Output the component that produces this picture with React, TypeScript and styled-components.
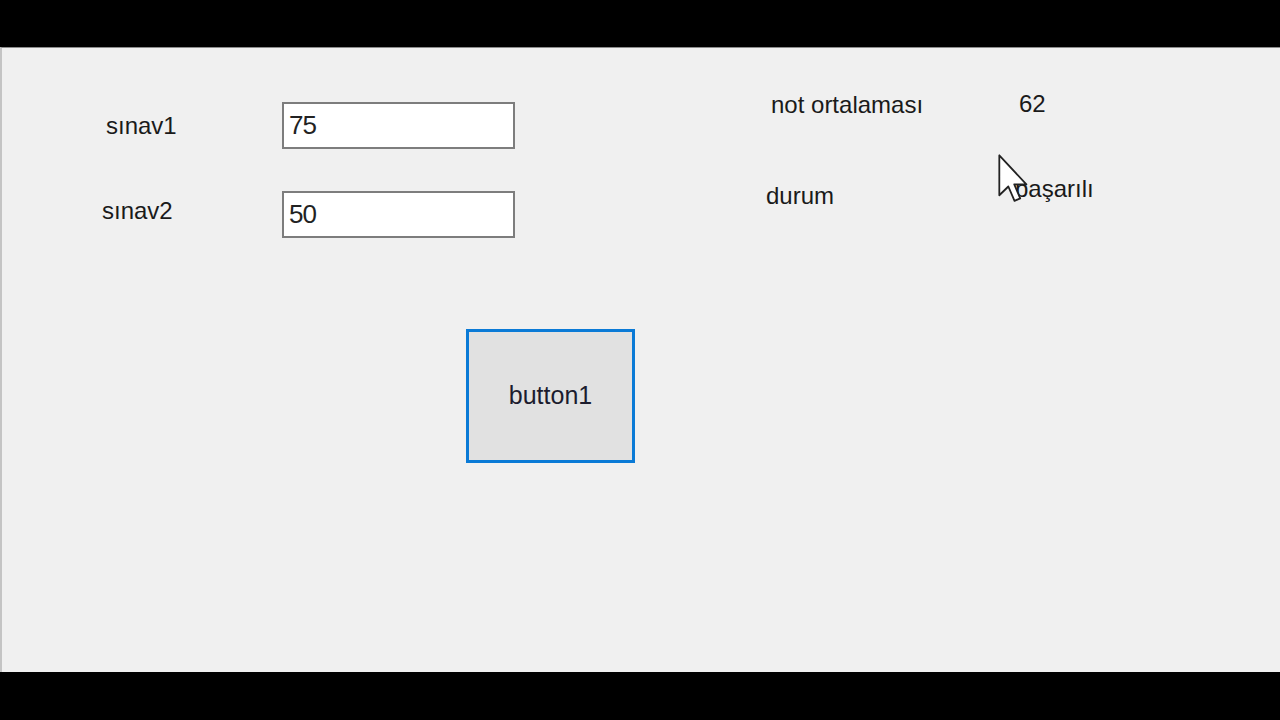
import React from "react";
import styled, { createGlobalStyle } from "styled-components";

const Global = createGlobalStyle`
  html, body { margin: 0; padding: 0; background: #000; }
  body { width: 1280px; height: 720px; overflow: hidden; }
`;

const Screen = styled.div`
  width: 1280px;
  height: 720px;
  display: flex;
  flex-direction: column;
  background: #000;
`;

const Bar = styled.div<{ $h: number }>`
  height: ${(p) => p.$h}px;
  flex: none;
  background: #000;
`;

const Form = styled.div`
  position: relative;
  height: 625px;
  flex: none;
  background: #f0f0f0;
  border-top: 1px solid #8c8c8c;
  border-left: 2px solid #c4c4c4;
  box-sizing: border-box;
  display: flex;
  font-family: "Liberation Sans", Arial, sans-serif;
  color: #1a1a1a;
`;

const LeftPane = styled.div`
  width: 700px;
  padding: 54px 0 0 101px;
  box-sizing: border-box;
  display: flex;
  flex-direction: column;
`;

const FieldRow = styled.div<{ $labelShift: number }>`
  display: grid;
  grid-template-columns: 179px 233px;
  align-items: center;
  height: 47px;
  margin-bottom: 42px;
  & > span { transform: translate(${(p) => p.$labelShift}px, ${(p) => p.$labelShift < 0 ? -4 : 0}px); }
`;

const Label = styled.span`
  font-size: 24px;
  letter-spacing: 0;
  line-height: 1;
`;

const TextBox = styled.div`
  height: 47px;
  box-sizing: border-box;
  background: #fff;
  border: 2px solid #7d7d7d;
  display: flex;
  align-items: center;
  padding-left: 5px;
  font-size: 26px;
  letter-spacing: -1px;
  color: #222;
`;

const Button = styled.div`
  margin: 49px 0 0 363px;
  width: 169px;
  height: 134px;
  box-sizing: border-box;
  border: 3px solid #0a7ad6;
  background: #e1e1e1;
  display: flex;
  align-items: center;
  justify-content: center;
  font-size: 25px;
  letter-spacing: 0;
  color: #1c1c2e;
  padding-bottom: 2px;
`;

const RightPane = styled.div`
  padding: 39px 0 0 64px;
  display: grid;
  grid-template-columns: 248px auto;
  grid-template-rows: 36px 36px;
  row-gap: 50px;
  align-content: start;
  align-items: center;
`;

const Cell = styled.span<{ $dx?: number; $dy?: number }>`
  font-size: 24px;
  letter-spacing: 0;
  line-height: 1;
  transform: translate(${(p) => p.$dx ?? 0}px, ${(p) => p.$dy ?? 0}px);
`;

const Cursor = styled.svg`
  position: absolute;
  left: 996px;
  top: 106px;
  width: 31px;
  height: 49px;
`;

export default function App() {
  return (
    <>
      <Global />
      <Screen>
        <Bar $h={47} />
        <Form>
          <LeftPane>
            <FieldRow $labelShift={3}>
              <Label>sınav1</Label>
              <TextBox>75</TextBox>
            </FieldRow>
            <FieldRow $labelShift={-1}>
              <Label>sınav2</Label>
              <TextBox>50</TextBox>
            </FieldRow>
            <Button>button1</Button>
          </LeftPane>
          <RightPane>
            <Cell $dx={5}>not ortalaması</Cell>
            <Cell $dx={5} $dy={-1}>62</Cell>
            <Cell $dy={5}>durum</Cell>
            <Cell $dx={1} $dy={-2}>başarılı</Cell>
          </RightPane>
          <Cursor viewBox="0 0 12 19">
            <path
              d="M0.5 0.5 L0.5 16 L4 12.6 L6.4 18.2 L8.6 17.2 L6.3 11.8 L11 11.8 Z"
              fill="#fff"
              stroke="#222"
              strokeWidth="0.7"
              strokeLinejoin="round"
            />
          </Cursor>
        </Form>
        <Bar $h={48} />
      </Screen>
    </>
  );
}
